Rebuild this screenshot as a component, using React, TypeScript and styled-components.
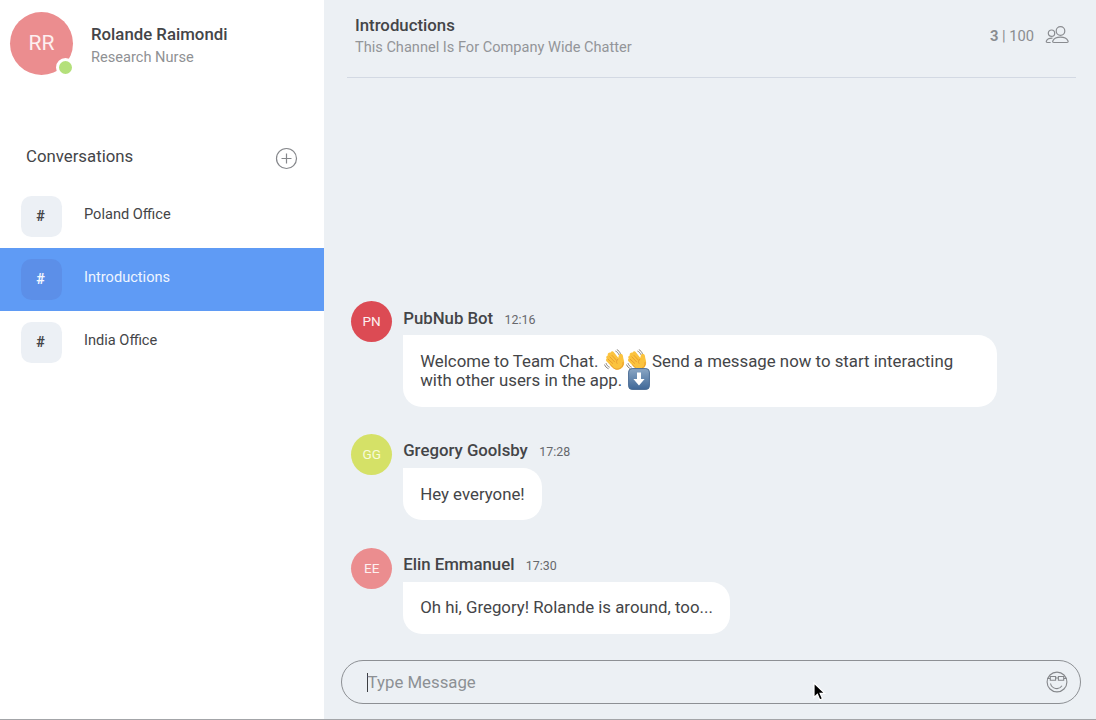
import React from "react";
import styled, { createGlobalStyle } from "styled-components";

const GlobalStyle = createGlobalStyle`
  * { box-sizing: border-box; }
  body { margin: 0; font-family: Roboto, "Liberation Sans", sans-serif; color: #444548; background: #fff; overflow: hidden; }
`;

const Page = styled.div`
  display: flex;
  width: 1096px;
  height: 720px;
  border-bottom: 1px solid #a3a5a8;
  background: #ffffff;
`;

const Sidebar = styled.aside`
  flex: 0 0 324.4px;
`;

const Label = styled.div<{ $size: number; $weight?: number; $color?: string }>`
  font-size: ${(p) => p.$size}px;
  line-height: 22px;
  font-weight: ${(p) => p.$weight ?? 400};
  color: ${(p) => p.$color ?? "#444548"};
  white-space: nowrap;
`;

const Profile = styled.header`
  display: flex;
  height: 142px;
  padding: 12.4px 0 0 10px;
`;

const ProfileText = styled.div`
  display: grid;
  align-content: start;
  gap: 0.7px;
  padding: 11px 0 0 18px;
`;

const Avatar = styled.div<{ $size: number; $color: string; $font: number; $ink?: string }>`
  position: relative;
  display: flex;
  flex: none;
  align-items: center;
  justify-content: center;
  width: ${(p) => p.$size}px;
  height: ${(p) => p.$size}px;
  padding-bottom: 1px;
  border-radius: 50%;
  background: ${(p) => p.$color};
  color: ${(p) => p.$ink ?? "#fdf0f0"};
  font-size: ${(p) => p.$font}px;
`;

const Presence = styled.span`
  position: absolute;
  right: -1.5px;
  bottom: -1.5px;
  width: 19px;
  height: 19px;
  border: 3px solid #fff;
  border-radius: 50%;
  background: #b4e07b;
`;

const SectionHead = styled.div`
  display: flex;
  justify-content: space-between;
  height: 42.5px;
  padding: 3px 26.4px 0 26px;
`;

const AddIcon = styled.svg`
  margin-top: 2px;
`;

const Channel = styled.div<{ $active?: boolean }>`
  display: flex;
  align-items: center;
  gap: 22px;
  height: 63px;
  padding-left: 21px;
  background: ${(p) => (p.$active ? "#5f9bf5" : "transparent")};
`;

const Hash = styled.div<{ $active?: boolean }>`
  display: flex;
  align-items: center;
  justify-content: center;
  width: 41px;
  height: 41px;
  padding-right: 2px;
  border-radius: 10.5px;
  background: ${(p) => (p.$active ? "#5c8fe8" : "#ecf0f5")};
  color: ${(p) => (p.$active ? "#f4f8ff" : "#444548")};
  font-size: 14.5px;
  font-weight: 700;
`;

const ChannelName = styled(Label)`
  margin-bottom: 5px;
`;

const Main = styled.main`
  display: flex;
  flex: 1;
  flex-direction: column;
  min-width: 0;
  background: #ecf0f4;
`;

const ChatHead = styled.header`
  display: flex;
  justify-content: space-between;
  height: 77.5px;
  margin: 0 20px 0 22.4px;
  padding: 14px 6.4px 0 8.2px;
  border-bottom: 1.5px solid #d3d9e3;
`;

const Members = styled.div`
  display: flex;
  gap: 10.5px;
  padding-top: 10.5px;
`;

const Messages = styled.section`
  display: flex;
  flex: 1;
  flex-direction: column;
  justify-content: flex-end;
  gap: 27.2px;
  padding: 0 0 26px 26.8px;
`;

const Message = styled.article`
  display: flex;
  align-items: flex-start;
  gap: 11px;
`;

const MessageHead = styled.div`
  display: flex;
  align-items: baseline;
  gap: 11.4px;
  height: 34px;
  padding-top: 5.4px;
`;

const Bubble = styled.div<{ $wide?: boolean }>`
  width: ${(p) => (p.$wide ? "594px" : "fit-content")};
  padding: ${(p) => (p.$wide ? "16.4px 17px 16.6px" : "16.5px 17.2px 16.7px 17px")};
  border-radius: 0 19px 19px 19px;
  background: #fff;
  font-size: 16.82px;
  line-height: 19.2px;
  white-space: nowrap;
`;

const Emoji = styled.svg`
  display: inline-block;
  width: 22px;
  height: 22px;
  margin: -4px -0.5px 0 1.2px;
  vertical-align: -4px;
`;

const Composer = styled.div`
  display: flex;
  align-items: center;
  justify-content: space-between;
  height: 44px;
  margin: 0 15px 15px 16.8px;
  padding: 0 12.5px 0 25px;
  border: 1.3px solid #8d9094;
  border-radius: 22px;
`;

const Field = styled.div`
  display: flex;
  align-items: center;
`;

const Caret = styled.span`
  width: 1px;
  height: 19px;
  margin-right: -0.6px;
  background: #3c3e42;
`;

const Pointer = styled.svg`
  position: absolute;
  left: 812px;
  top: 681px;
`;

const Wave = () => (
  <Emoji viewBox="0 0 22 22" aria-label="waving hand">
    <path d="M3.5 7.3c1-.8 1.8-.2 2.4.6L4.5 5.8C4 4.9 5.500 3.600 6.400 4.500L8 6.400 7.200 4.600C6.800 3.300 8.400 2.600 9.300 3.700l4.900 6.200.8-.4c.3-1.900.200-3.700 1.700-3.900 1.500-.1 1.500 1.300 1.700 2.800.3 2.400 1.600 4.400.9 7-.8 3.300-4.200 5.300-7.500 4.400-2.400-.7-3.800-2.600-5.400-4.500L3 11.700c-.8-1 .2-2 1.200-1.400L3.200 9c-.4-.6-.3-1.200.3-1.700z" fill="#fbc33e" stroke="#fbc33e" strokeWidth="1.500" />
    <path d="M4.200 10.300l4.500 4.100M5.900 7.900l4.600 4.900M8 6.400l4.400 4.700M6.700 15.800c2.500 3.900 5.500 5.300 8.800 3.700 2.500-1.100 3.900-3.200 3.600-6" fill="none" stroke="#e5942c" strokeWidth=".8" strokeLinecap="round" />
    <path d="M14.200 9.900c-1.800 1.500-2.100 3.100-1 4.800" fill="none" stroke="#e5942c" strokeWidth=".8" />
    <path d="M11.800 2.200c1.500.7 2.400 1.700 2.900 3.200M13.200.8c1.500.8 2.600 2 3.100 3.700M2.100 14.500c.6 1.700 1.600 2.900 3.200 3.600M.7 15.900c.7 1.800 1.800 3 3.500 3.700" fill="none" stroke="#77736d" strokeWidth=".9" strokeLinecap="round" />
  </Emoji>
);

const DownArrow = () => (
  <Emoji viewBox="0 0 22 22" aria-label="down arrow">
    <defs>
      <linearGradient id="key" x1="0" y1="0" x2="0" y2="1">
        <stop offset="0" stopColor="#8aa6c4" />
        <stop offset="1" stopColor="#3f6898" />
      </linearGradient>
    </defs>
    <rect x=".6" y=".6" width="20.800" height="20.800" rx="3.500" fill="url(#key)" stroke="#4a6c94" strokeWidth="1" />
    <path d="M9 4.500h4v6.500h3.600L11 17.500 5.400 11H9z" fill="#fff" />
  </Emoji>
);

const channels = ["Poland Office", "Introductions", "India Office"];

const messages = [
  {
    initials: "PN", color: "#dc4b54", name: "PubNub Bot", time: "12:16", wide: true,
    body: (
      <>
        Welcome to Team Chat. <Wave /><Wave /> Send a message now to start interacting
        <br />
        with other users in the app. <DownArrow />
      </>
    ),
  },
  { initials: "GG", color: "#d5e167", ink: "#f8fbd9", name: "Gregory Goolsby", time: "17:28", body: "Hey everyone!" },
  { initials: "EE", color: "#eb8d8f", name: "Elin Emmanuel", time: "17:30", body: "Oh hi, Gregory! Rolande is around, too..." },
];

export default function App() {
  return (
    <>
      <GlobalStyle />
      <Page>
        <Sidebar>
          <Profile>
            <Avatar $size={63} $color="#eb8d8f" $font={21}>
              RR
              <Presence />
            </Avatar>
            <ProfileText>
              <Label $size={16.8} $weight={500}>Rolande Raimondi</Label>
              <Label $size={14.6} $color="#8f9194">Research Nurse</Label>
            </ProfileText>
          </Profile>
          <SectionHead>
            <Label $size={16.8}>Conversations</Label>
            <AddIcon width="23" height="23" viewBox="0 0 23 23" fill="none" stroke="#85878b" strokeWidth="1.200">
              <circle cx="11.500" cy="11.500" r="10" />
              <path d="M11.500 6.500v10M6.500 11.500h10" />
            </AddIcon>
          </SectionHead>
          {channels.map((name) => {
            const active = name === "Introductions";
            return (
              <Channel key={name} $active={active}>
                <Hash $active={active}>#</Hash>
                <ChannelName $size={14.6} $color={active ? "#eef5ff" : undefined}>{name}</ChannelName>
              </Channel>
            );
          })}
        </Sidebar>
        <Main>
          <ChatHead>
            <div>
              <Label $size={16.8} $weight={500}>Introductions</Label>
              <Label $size={14.58} $color="#939599">This Channel Is For Company Wide Chatter</Label>
            </div>
            <Members>
              <Label $size={14.7} $color="#8a8c90"><b>3</b> | 100</Label>
              <svg width="25" height="22" viewBox="0 0 25 22" fill="none" stroke="#8a8c90" strokeWidth="1.200">
                <circle cx="15.500" cy="6" r="4.300" />
                <circle cx="6.500" cy="8.200" r="3.200" />
                <path d="M9 17.500c-1.400 0-1.600-.7-1.100-1.800 1.200-2.400 3.900-3.500 7.500-3.500s6.400 1.100 7.500 3.500c.5 1.100.2 1.800-1.100 1.800zM5.600 17.500H2.500c-1.200 0-1.500-.7-1-1.700.9-1.900 2.700-2.700 6-2.600" />
              </svg>
            </Members>
          </ChatHead>
          <Messages>
            {messages.map((m) => (
              <Message key={m.initials}>
                <Avatar $size={41} $color={m.color} $font={13.6} $ink={m.ink}>{m.initials}</Avatar>
                <div>
                  <MessageHead>
                    <Label $size={16.8} $weight={500}>{m.name}</Label>
                    <Label $size={12.4} $color="#66686c">{m.time}</Label>
                  </MessageHead>
                  <Bubble $wide={m.wide}>{m.body}</Bubble>
                </div>
              </Message>
            ))}
          </Messages>
          <Composer>
            <Field>
              <Caret />
              <Label $size={16.8} $color="#8d9094">Type Message</Label>
            </Field>
            <svg width="22" height="22" viewBox="0 0 22 22" fill="none" stroke="#85878b" strokeWidth="1.100">
              <circle cx="11" cy="11" r="9.900" />
              <path d="M1.500 7.500h2.800M17.700 7.500h2.800M9.600 7h2.800M4.300 5.500h5.300v3.700H4.300zM12.400 5.500h5.300v3.700h-5.300zM4.500 12.500c1.300 5.600 8.500 6.800 11.500 2.300" />
            </svg>
          </Composer>
        </Main>
        <Pointer width="14" height="21" viewBox="0 0 14 21">
          <path d="M2 2v14.500l3.400-3.200 2.400 5.600 2.700-1.200-2.400-5.300h4.700z" fill="#000" stroke="#fff" strokeWidth="1.200" />
        </Pointer>
      </Page>
    </>
  );
}
